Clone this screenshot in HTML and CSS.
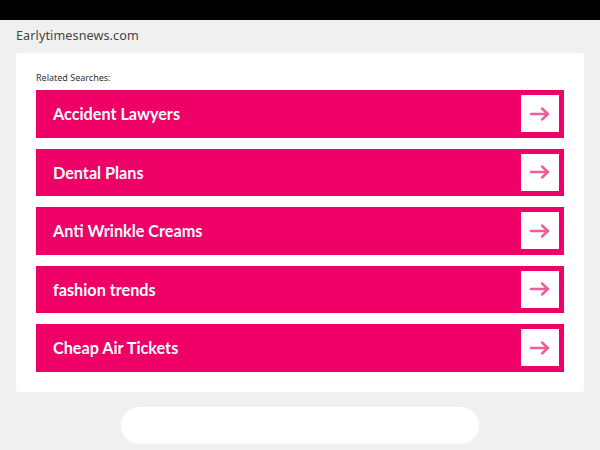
FILE: index.html
```html
<!DOCTYPE html>
<html lang="en">
<head>
  <meta charset="UTF-8" />
  <meta name="viewport" content="width=device-width, initial-scale=1.0" />
  <title>Earlytimesnews.com</title>
  <link rel="stylesheet" href="styles.css">
</head>
<body>
  <div class="topbar"></div>

  <div class="page">
    <div class="site-name">Earlytimesnews.com</div>

    <div class="card">
      <div class="related-title">Related Searches:</div>
      <div class="links">
        <a class="link" href="#"><span>Accident Lawyers</span><span class="arrow-box"><svg width="20" height="14" viewBox="0 0 20 14"><path d="M1 7H18M12 1.5L18 7L12 12.5" fill="none" stroke="#e95f97" stroke-width="2.4" stroke-linecap="round" stroke-linejoin="round"/></svg></span></a>
        <a class="link" href="#"><span>Dental Plans</span><span class="arrow-box"><svg width="20" height="14" viewBox="0 0 20 14"><path d="M1 7H18M12 1.5L18 7L12 12.5" fill="none" stroke="#e95f97" stroke-width="2.4" stroke-linecap="round" stroke-linejoin="round"/></svg></span></a>
        <a class="link" href="#"><span>Anti Wrinkle Creams</span><span class="arrow-box"><svg width="20" height="14" viewBox="0 0 20 14"><path d="M1 7H18M12 1.5L18 7L12 12.5" fill="none" stroke="#e95f97" stroke-width="2.4" stroke-linecap="round" stroke-linejoin="round"/></svg></span></a>
        <a class="link" href="#"><span>fashion trends</span><span class="arrow-box"><svg width="20" height="14" viewBox="0 0 20 14"><path d="M1 7H18M12 1.5L18 7L12 12.5" fill="none" stroke="#e95f97" stroke-width="2.4" stroke-linecap="round" stroke-linejoin="round"/></svg></span></a>
        <a class="link" href="#"><span>Cheap Air Tickets</span><span class="arrow-box"><svg width="20" height="14" viewBox="0 0 20 14"><path d="M1 7H18M12 1.5L18 7L12 12.5" fill="none" stroke="#e95f97" stroke-width="2.4" stroke-linecap="round" stroke-linejoin="round"/></svg></span></a>
      </div>
    </div>

    <div class="search-pill"></div>
  </div>
</body>
</html>
```

FILE: styles.css
```css
body {
  margin: 0;
  padding: 0;
  background: #f0f0f0;
  font-family: "Open Sans", Arial, sans-serif;
  overflow: hidden;
}

.topbar {
  height: 20px;
  background: #000;
}

.page {
  padding: 0 16px;
}

.site-name {
  font-family: "Noto Sans", Arial, sans-serif;
  font-size: 12.6px;
  color: #444;
  height: 33px;
  line-height: 32px;
  letter-spacing: 0.1px;
}

.card {
  background: #fff;
  border-radius: 3px;
  padding: 17px 20px 20px;
  height: 302px;
}

.related-title {
  font-family: "Noto Sans", Arial, sans-serif;
  font-size: 9px;
  color: #333;
  line-height: 16px;
  margin-bottom: 4px;
}

.links {
  display: flex;
  flex-direction: column;
  gap: 11px;
}

.link {
  display: flex;
  align-items: center;
  justify-content: space-between;
  height: 47.5px;
  background: #ee0066;
  color: #fff;
  text-decoration: none;
  font-family: Lato, Arial, sans-serif;
  font-weight: bold;
  font-size: 16.2px;
  padding: 0 5px 0 17px;
}

.arrow-box {
  width: 38px;
  height: 37px;
  background: #fff;
  display: flex;
  align-items: center;
  justify-content: center;
}

.search-pill {
  width: 358px;
  height: 37px;
  margin: 15px auto 0;
  background: #fff;
  border-radius: 19px;
}
```
